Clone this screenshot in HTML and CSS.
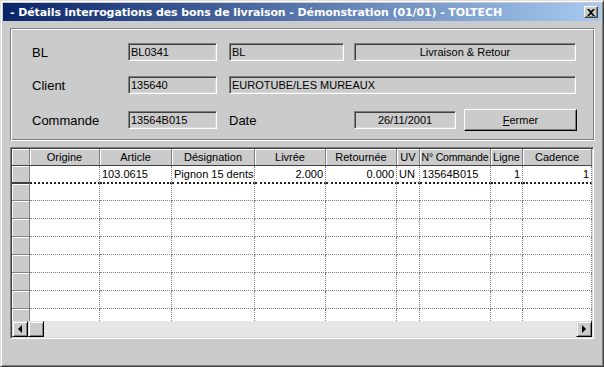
FILE: index.html
```html
<!DOCTYPE html>
<html lang="fr">
<head>
  <meta charset="UTF-8" />
  <title>Détails interrogations des bons de livraison</title>
  <link rel="stylesheet" href="styles.css">
</head>
<body>
  <div class="window">
    <div class="titlebar">
      <span class="title">- Détails interrogations des bons de livraison - Démonstration (01/01) - TOLTECH</span>
      <button class="close-btn" aria-label="Fermer">
        <svg width="8" height="7" viewBox="0 0 8 7"><path d="M0 0h2l2 2 2-2h2L5 3.5 8 7H6L4 5 2 7H0l3-3.5z" fill="#000"/></svg>
      </button>
    </div>

    <div class="content">
      <!-- En-tête du bon -->
      <div class="panel">
        <div class="form">
          <span class="label r1">BL</span>
          <div class="field r1 c2">BL0341</div>
          <div class="field r1 c4">BL</div>
          <div class="field r1 wide-right center">Livraison &amp; Retour</div>

          <span class="label r2">Client</span>
          <div class="field r2 c2">135640</div>
          <div class="field r2 wide-all">EUROTUBE/LES MUREAUX</div>

          <span class="label r3">Commande</span>
          <div class="field r3 c2">13564B015</div>
          <span class="label r3 c4">Date</span>
          <div class="field r3 c6 center">26/11/2001</div>
          <button class="btn r3 c8"><u>F</u>ermer</button>
        </div>
      </div>

      <!-- Lignes -->
      <div class="grid">
        <div class="grid-view">
          <table class="lines">
            <colgroup>
              <col class="w-rh"><col class="w-70"><col class="w-72"><col class="w-83"><col class="w-71"><col class="w-71"><col class="w-23"><col class="w-71"><col class="w-32"><col class="w-69">
            </colgroup>
            <thead>
              <tr>
                <th></th><th>Origine</th><th>Article</th><th>Désignation</th><th>Livrée</th><th>Retournée</th><th>UV</th><th class="tight">N° Commande</th><th>Ligne</th><th>Cadence</th>
              </tr>
            </thead>
            <tbody>
              <tr class="current">
                <th></th><td></td><td>103.0615</td><td>Pignon 15 dents</td><td class="num">2.000</td><td class="num">0.000</td><td>UN</td><td>13564B015</td><td class="num">1</td><td class="num">1</td>
              </tr>
              <tr class="first-empty"><th></th><td></td><td></td><td></td><td></td><td></td><td></td><td></td><td></td><td></td></tr>
              <tr><th></th><td></td><td></td><td></td><td></td><td></td><td></td><td></td><td></td><td></td></tr>
              <tr><th></th><td></td><td></td><td></td><td></td><td></td><td></td><td></td><td></td><td></td></tr>
              <tr><th></th><td></td><td></td><td></td><td></td><td></td><td></td><td></td><td></td><td></td></tr>
              <tr><th></th><td></td><td></td><td></td><td></td><td></td><td></td><td></td><td></td><td></td></tr>
              <tr><th></th><td></td><td></td><td></td><td></td><td></td><td></td><td></td><td></td><td></td></tr>
              <tr><th></th><td></td><td></td><td></td><td></td><td></td><td></td><td></td><td></td><td></td></tr>
              <tr><th></th><td></td><td></td><td></td><td></td><td></td><td></td><td></td><td></td><td></td></tr>
            </tbody>
          </table>
        </div>
        <div class="hscroll">
          <div class="sb-btn"><span class="arrow-left"></span></div>
          <div class="sb-btn thumb"></div>
          <div class="sb-track"></div>
          <div class="sb-btn"><span class="arrow-right"></span></div>
        </div>
      </div>
    </div>
  </div>
</body>
</html>
```

FILE: styles.css
```css
/* Classic dialog colours */
:root {
  --face: #cbcbcb;
  --light: #ffffff;
  --shadow: #808080;
  --dark: #404040;
  --ui-font: 'Liberation Sans', Arial, sans-serif;
}
body {
  margin: 0;
  background: var(--face);
  font-family: var(--ui-font);
  font-size: 11px;
  color: #000;
}
.window {
  width: 604px;
  height: 367px;
  box-sizing: border-box;
  border: 1px solid;
  border-color: #dedede var(--dark) var(--dark) #dedede;
  box-shadow: inset 1px 1px var(--light), inset -1px -1px var(--shadow);
  padding: 2px;
  background: var(--face);
  overflow: hidden;
}
/* Title bar */
.titlebar {
  height: 18px;
  display: flex;
  align-items: center;
  justify-content: space-between;
  padding: 0 3px 0 7px;
  background: linear-gradient(90deg, #0a246a, #a6caf0);
}
.title {
  color: #fff;
  font-family: 'DejaVu Sans', Verdana, sans-serif;
  font-weight: bold;
  font-size: 11px;
  letter-spacing: -0.1px;
  white-space: nowrap;
}
.close-btn {
  width: 14px;
  height: 12px;
  padding: 0;
  display: flex;
  align-items: center;
  justify-content: center;
  background: var(--face);
  border: 1px solid;
  border-color: var(--light) var(--dark) var(--dark) var(--light);
  box-shadow: inset -1px -1px var(--shadow);
}
.content {
  padding: 7px 6px 0 7px;
}
/* Header panel */
.panel {
  height: 113px;
  box-sizing: border-box;
  border: 1px solid;
  border-color: var(--shadow) var(--light) var(--light) var(--shadow);
  box-shadow: inset 1px 1px var(--light), inset -1px -1px var(--shadow);
  padding: 14px 0 0 21px;
}
.form {
  display: grid;
  grid-template-columns: 96px 89px 12px 115px 10px 102px 8px 113px;
  grid-template-rows: 18px 18px 22px;
  row-gap: 15px;
}
.label {
  grid-column: 1;
  align-self: center;
  font-size: 13px;
}
.field {
  height: 18px;
  box-sizing: border-box;
  align-self: center;
  border: 1px solid;
  border-color: var(--shadow) var(--light) var(--light) var(--shadow);
  box-shadow: inset 1px 1px var(--dark), inset -1px -1px #d8d8d8;
  padding: 2px 0 0 2px;
  line-height: 13px;
  white-space: nowrap;
  overflow: hidden;
}
.field.center { text-align: center; padding-left: 0; }
.r1 { grid-row: 1; }
.r2 { grid-row: 2; }
.r3 { grid-row: 3; }
.c2 { grid-column: 2; }
.c4 { grid-column: 4; }
.c6 { grid-column: 6; }
.c8 { grid-column: 8; }
.wide-right { grid-column: 6 / 9; margin-right: 1px; }
.wide-all { grid-column: 4 / 9; margin-right: 1px; }
.btn {
  font-family: var(--ui-font);
  font-size: 11px;
  background: var(--face);
  border: 1px solid;
  border-color: var(--light) #000 #000 var(--light);
  box-shadow: inset -1px -1px var(--shadow);
  padding: 0;
}
/* Lines grid */
.grid {
  margin-top: 6px;
  width: 584px;
  height: 192px;
  box-sizing: border-box;
  border: 1px solid;
  border-color: var(--shadow) var(--light) var(--light) var(--shadow);
  box-shadow: inset 1px 1px var(--dark), inset -1px -1px #d8d8d8;
  padding: 1px;
  display: flex;
  flex-direction: column;
}
.grid-view {
  height: 173px;
  overflow: hidden;
  background: #fff;
}
.lines {
  table-layout: fixed;
  width: 580px;
  border-collapse: separate;
  border-spacing: 0;
}
.w-rh { width: 18px; }
.w-70 { width: 70px; }
.w-72 { width: 72px; }
.w-83 { width: 83px; }
.w-71 { width: 71px; }
.w-23 { width: 23px; }
.w-32 { width: 32px; }
.w-69 { width: 69px; }
.lines th,
.lines td {
  padding: 0 2px;
  box-sizing: border-box;
  white-space: nowrap;
  overflow: hidden;
  font-size: 11px;
  font-weight: normal;
}
.lines thead th {
  height: 17px;
  background: var(--face);
  border-right: 1px solid var(--shadow);
  border-bottom: 1px solid var(--dark);
  box-shadow: inset 1px 1px var(--light);
  text-align: center;
  padding: 0 1px;
}
.lines thead th.tight {
  padding: 0;
  font-size: 10.5px;
  letter-spacing: -0.2px;
}
.lines tbody th {
  height: 18px;
  background: var(--face);
  border-right: 1px solid var(--shadow);
  border-bottom: 1px solid var(--shadow);
  box-shadow: inset 1px 1px var(--light);
}
.lines td {
  height: 18px;
  border-right: 1px dotted var(--shadow);
  border-bottom: 1px dotted var(--shadow);
  text-align: left;
}
.lines td.num { text-align: right; }
.lines tr.current td { border-bottom: 2px dotted #222; }
.lines tr.current th { border-bottom: 2px solid var(--dark); }
.lines tr.first-empty th,
.lines tr.first-empty td { height: 17px; }
/* Horizontal scrollbar */
.hscroll {
  height: 16px;
  display: flex;
  background: #e6e6e8;
}
.sb-btn {
  width: 16px;
  height: 16px;
  box-sizing: border-box;
  background: var(--face);
  border: 1px solid;
  border-color: #dedede #000 #000 #dedede;
  box-shadow: inset 1px 1px var(--light), inset -1px -1px var(--shadow);
  display: flex;
  align-items: center;
  justify-content: center;
}
.sb-track { flex: 1; }
.arrow-left {
  width: 0;
  height: 0;
  border-top: 4px solid transparent;
  border-bottom: 4px solid transparent;
  border-right: 4px solid #000;
}
.arrow-right {
  width: 0;
  height: 0;
  border-top: 4px solid transparent;
  border-bottom: 4px solid transparent;
  border-left: 4px solid #000;
}
```
